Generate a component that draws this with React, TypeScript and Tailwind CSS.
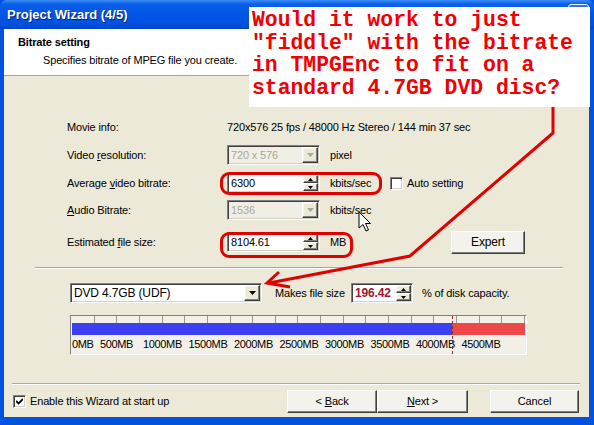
import type { ReactNode } from "react";

const sunken =
  "border border-t-[#808080] border-l-[#808080] border-b-white border-r-white shadow-[inset_1px_1px_0_#404040,inset_-1px_-1px_0_#d4d0c8]";
const raised =
  "border border-t-white border-l-white border-b-[#404040] border-r-[#404040] shadow-[inset_-1px_-1px_0_#808080,inset_1px_1px_0_#f4f3ee]";

function Tri({ up = false, color = "#000", small = false }: { up?: boolean; color?: string; small?: boolean }) {
  const w = small ? 5 : 7;
  const h = small ? 3 : 4;
  return (
    <svg width={w} height={h} viewBox={`0 0 ${w} ${h}`}>
      <path d={up ? `M${w / 2} 0L${w} ${h}H0Z` : `M0 0H${w}L${w / 2} ${h}Z`} fill={color} />
    </svg>
  );
}

function Combo({ value, disabled = false, className = "" }: { value: string; disabled?: boolean; className?: string }) {
  return (
    <div
      className={`flex h-[20px] ${sunken} ${disabled ? "bg-[#f0eee5] text-[#aca899]" : "bg-white text-black"} ${className}`}
    >
      <span className="flex-1 truncate pl-[3px] leading-[18px]">{value}</span>
      <div className={`m-[1px] flex w-[16px] items-center justify-center bg-[#ece9d8] ${raised}`}>
        <Tri color={disabled ? "#aca899" : "#000"} />
      </div>
    </div>
  );
}

function SpinField({ value, className = "", textClass = "" }: { value: string; className?: string; textClass?: string }) {
  return (
    <div className={`flex h-[20px] bg-white ${sunken} ${className}`}>
      <span className={`flex-1 pl-[3px] leading-[18px] ${textClass}`}>{value}</span>
      <div className="my-[1px] mr-[1px] flex w-[15px] flex-col">
        <div className={`flex flex-1 items-center justify-center bg-[#ece9d8] ${raised}`}>
          <Tri up small />
        </div>
        <div className={`flex flex-1 items-center justify-center bg-[#ece9d8] ${raised}`}>
          <Tri small />
        </div>
      </div>
    </div>
  );
}

function CheckBox({ checked = false }: { checked?: boolean }) {
  return (
    <div className={`flex h-[13px] w-[13px] items-center justify-center bg-white ${sunken}`}>
      {checked && (
        <svg width="7" height="7" viewBox="0 0 7 7">
          <path d="M0 3L2.5 5.5L7 1" stroke="#000" strokeWidth="1.8" fill="none" />
        </svg>
      )}
    </div>
  );
}

function Button({ children, className = "" }: { children: ReactNode; className?: string }) {
  return (
    <div className={`flex h-[23px] items-center justify-center bg-[#f3f2ec] ${raised} ${className}`}>
      {children}
    </div>
  );
}

function Row({ label, children, className = "" }: { label: ReactNode; children: ReactNode; className?: string }) {
  return (
    <div className={`flex h-[20px] items-center pl-[63px] ${className}`}>
      <span className="w-[160px]">{label}</span>
      {children}
    </div>
  );
}

const scale = ["0MB", "500MB", "1000MB", "1500MB", "2000MB", "2500MB", "3000MB", "3500MB", "4000MB", "4500MB"];

export default function App() {
  return (
    <div className="relative h-[425px] w-[594px] overflow-hidden bg-[#0052e0] font-['Liberation_Sans',Arial,sans-serif] text-[11px] tracking-[-0.15px] text-black">
      <div className="flex h-full flex-col">
        {/* title bar */}
        <div className="relative flex h-[29px] items-center rounded-t-[7px] bg-[linear-gradient(180deg,#3d8ef7_0%,#0a5fea_14%,#0055e5_50%,#0051de_85%,#0042c4_100%)] pl-[7px]">
          <span className="text-[13px] font-bold tracking-normal text-white [text-shadow:1px_1px_0_#0a1e6e]">
            Project Wizard (4/5)
          </span>
          <div className="absolute right-[5px] top-[4px] h-[21px] w-[21px] rounded-[3px] border border-[#e8f0ff] bg-[#2f72ec]" />
        </div>

        <div className="mb-[8px] ml-[4px] mr-[5px] flex flex-1 flex-col bg-[#ece9d8]">
          {/* header */}
          <div className="h-[47px] border-b border-[#aca899] bg-white pl-[14px] pt-[6px]">
            <div className="font-bold leading-[14px]">Bitrate setting</div>
            <div className="mt-[4px] pl-[25px] leading-[14px]">Specifies bitrate of MPEG file you create.</div>
          </div>

          <Row label="Movie info:" className="mt-[41px]">
            <span>720x576 25 fps / 48000 Hz Stereo / 144 min 37 sec</span>
          </Row>

          <Row
            label={
              <>
                Video <u>r</u>esolution:
              </>
            }
            className="mt-[8px]"
          >
            <Combo value="720 x 576" disabled className="w-[93px]" />
            <span className="ml-[10px] w-[60px]">pixel</span>
          </Row>

          <Row
            label={
              <>
                Average <u>v</u>ideo bitrate:
              </>
            }
            className="mt-[8px]"
          >
            <SpinField value="6300" className="w-[93px]" />
            <span className="ml-[10px] w-[60px]">kbits/sec</span>
            <CheckBox />
            <span className="ml-[4px]">Auto setting</span>
          </Row>

          <Row
            label={
              <>
                <u>A</u>udio Bitrate:
              </>
            }
            className="mt-[7px]"
          >
            <Combo value="1536" disabled className="w-[93px]" />
            <span className="ml-[10px] w-[60px]">kbits/sec</span>
          </Row>

          <Row
            label={
              <>
                Estimated <u>f</u>ile size:
              </>
            }
            className="mt-[12px]"
          >
            <SpinField value="8104.61" className="w-[93px]" />
            <span className="ml-[10px] w-[60px]">MB</span>
            <Button className="ml-[61px] w-[74px] text-[12px]">Expert</Button>
          </Row>

          <div className="ml-[31px] mt-[15px] h-[2px] w-[528px] border-t border-b border-t-[#aca899] border-b-white" />

          <div className="ml-[66px] mt-[14px] flex h-[20px] items-center">
            <Combo value="DVD 4.7GB (UDF)" className="w-[192px] text-[12px]" />
            <span className="ml-[13px] w-[76px]">Makes file size</span>
            <SpinField value="196.42" className="w-[62px]" textClass="text-[12px] font-bold text-[#a3152c]" />
            <span className="ml-[9px]">% of disk capacity.</span>
          </div>

          {/* disc usage bar */}
          <div className="relative ml-[66px] mt-[12px] flex h-[40px] w-[457px] flex-col border border-t-[#808080] border-l-[#808080] border-b-white border-r-white bg-[#f2f0e7]">
            <div className="mx-[1px] grid h-[7px] grid-cols-20">
              {Array.from({ length: 20 }).map((_, i) => (
                <div key={i} className="border-r border-[#9a978a]" />
              ))}
            </div>
            <div className="mx-[1px] flex h-[12px]">
              <div className="w-[380px] bg-[#3d3ff2]" />
              <div className="flex-1 bg-[#ef4848]" />
            </div>
            <div className="flex flex-1 items-center pl-[1px] text-[11px] tracking-[-0.35px]">
              {scale.map((s, i) => (
                <span key={s} className={i === 0 ? "w-[28px]" : i === 1 ? "w-[43px]" : "w-[45.5px]"}>
                  {s}
                </span>
              ))}
            </div>
            <div className="absolute bottom-0 left-[381px] top-0 border-l border-dashed border-[#8a2a2a]" />
          </div>

          <div className="ml-[8px] mt-[28px] h-[2px] w-[568px] border-t border-b border-t-[#aca899] border-b-white" />

          <div className="mt-[5px] flex h-[23px] items-center">
            <div className="ml-[9px]">
              <CheckBox checked />
            </div>
            <span className="ml-[4px]">Enable this Wizard at start up</span>
            <div className="ml-auto mr-[10px] flex">
              <Button className="w-[90px]">
                &lt; <u className="ml-[3px]">B</u>ack
              </Button>
              <Button className="w-[91px]">
                <u>N</u>ext &gt;
              </Button>
              <Button className="ml-[22px] w-[89px]">Cancel</Button>
            </div>
          </div>
        </div>
      </div>

      {/* annotation overlay */}
      <div className="absolute left-[249px] top-[7px] h-[100px] w-[341px] bg-white pl-[3px] pt-[2px] font-['Liberation_Mono','Courier_New',monospace] text-[21.4px] font-bold leading-[22.7px] tracking-normal text-[#f00000]">
        <div>Would it work to just</div>
        <div>"fiddle" with the bitrate</div>
        <div>in TMPGEnc to fit on a</div>
        <div>standard 4.7GB DVD disc?</div>
      </div>

      <div className="absolute left-[220px] top-[172px] h-[23px] w-[162px] rounded-[9px] border-[3px] border-[#e00000]" />
      <div className="absolute left-[220px] top-[232px] h-[26px] w-[133px] rounded-[9px] border-[3px] border-[#e00000]" />

      <svg className="pointer-events-none absolute left-0 top-0" width="594" height="425" viewBox="0 0 594 425">
        <polyline
          points="553,107 553,133 410,256 269,283"
          fill="none"
          stroke="#e00000"
          strokeWidth="3"
          strokeLinejoin="miter"
        />
        <polyline points="279,272 267,283 290,287" fill="none" stroke="#e00000" strokeWidth="3" />
        <path
          d="M359 212V228L363 224.5L366 231L368.5 230L365.5 223.5H370.5Z"
          fill="#fff"
          stroke="#000"
          strokeWidth="1"
          strokeLinejoin="round"
        />
      </svg>
    </div>
  );
}
